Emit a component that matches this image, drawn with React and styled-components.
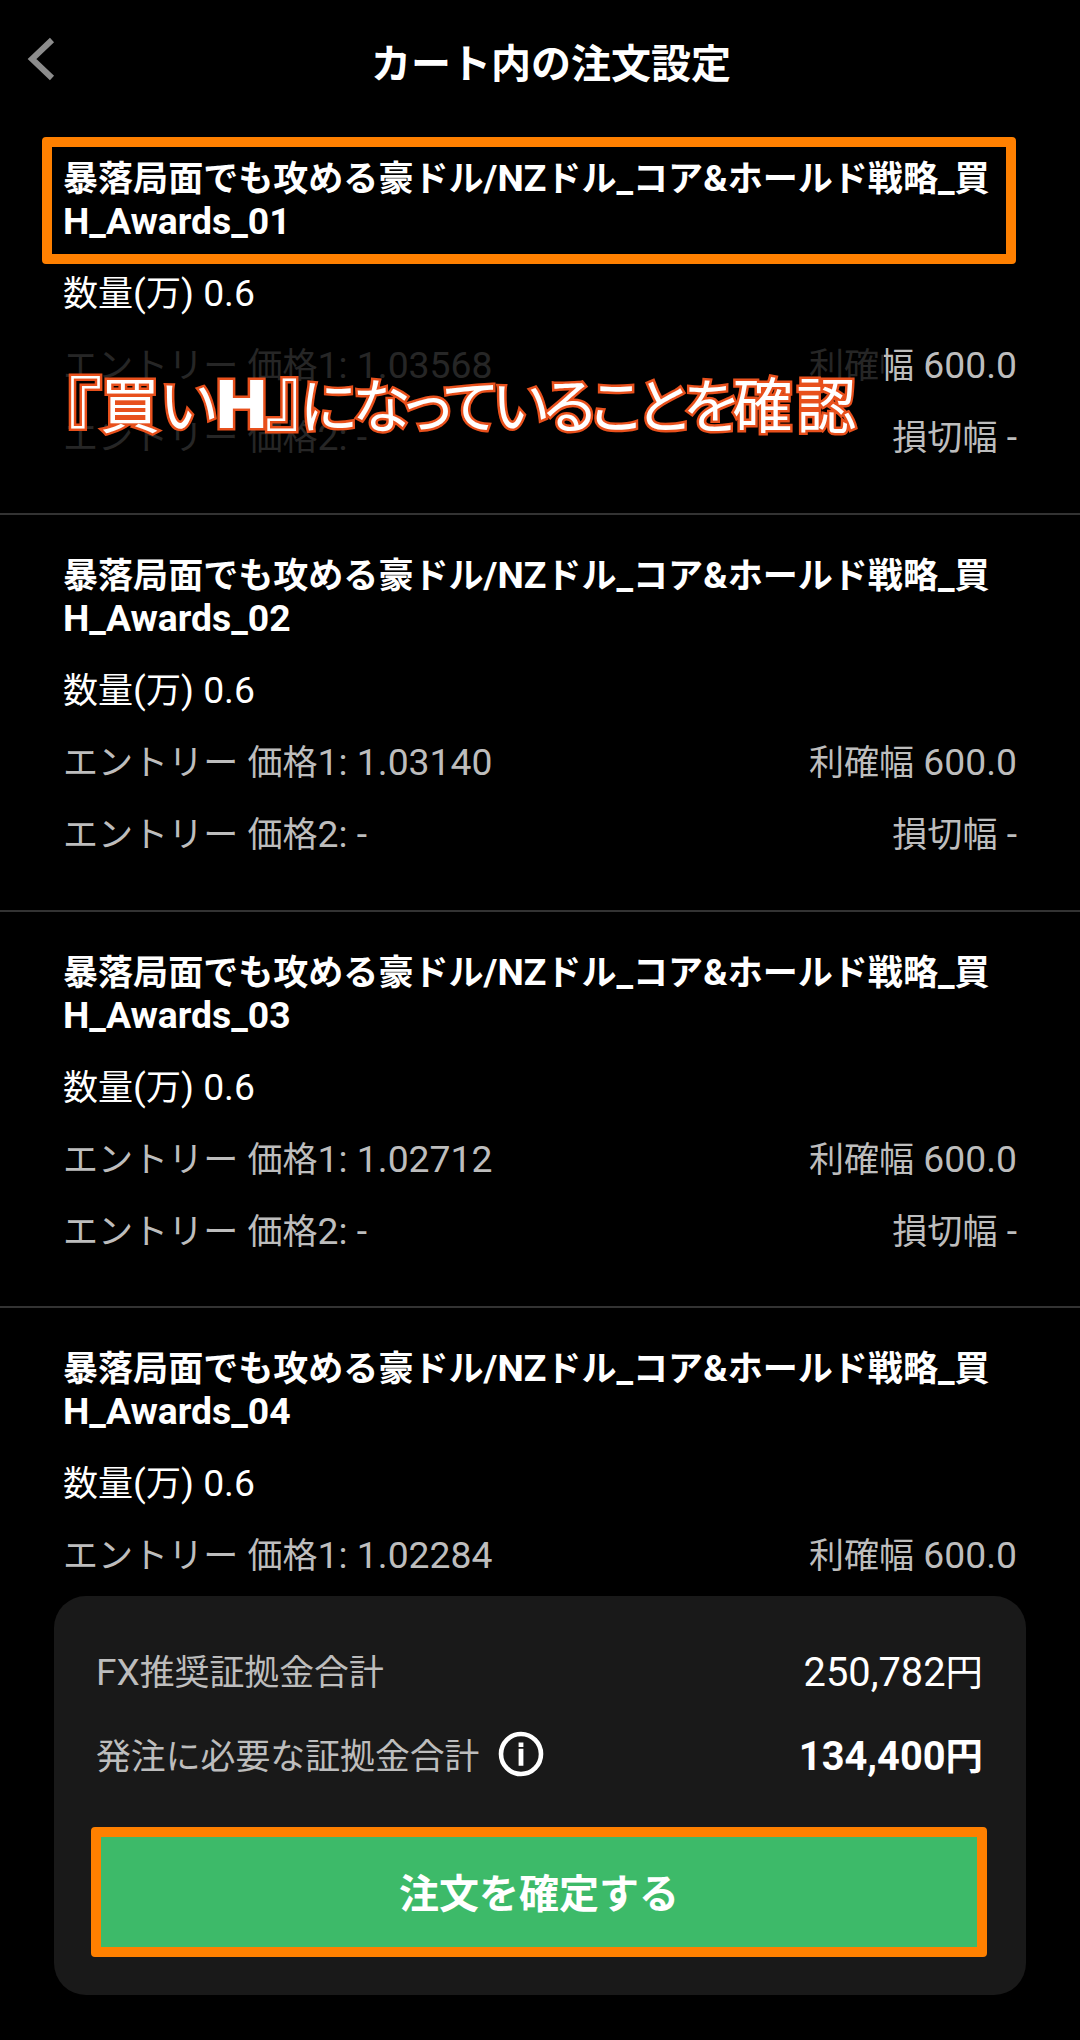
import React from 'react'
import styled, { createGlobalStyle } from 'styled-components'

const GlobalStyle = createGlobalStyle`
    * {
        box-sizing: border-box;
    }

    body {
        margin: 0;
        background: #000;
        color: #fff;
        font-family: Roboto, "Noto Sans CJK JP", sans-serif;
    }
`

const orders = [
    { id: '01', price: '1.03568' },
    { id: '02', price: '1.03140' },
    { id: '03', price: '1.02712' },
    { id: '04', price: '1.02284' },
]

const Screen = styled.div`
    position: relative;
    width: 1080px;
    height: 2040px;
    overflow: hidden;
    background: #000;
`

const Header = styled.header`
    display: grid;
    grid-template-columns: 84px 1fr 62px;
    align-items: center;
    height: 118px;
    padding-top: 12px;
`

const BackButton = styled.button`
    display: flex;
    align-items: center;
    width: 84px;
    height: 60px;
    margin-top: -12px;
    padding: 0 0 0 26px;
    border: 0;
    background: none;
    color: #8c8c8c;
`

const HeaderTitle = styled.h1`
    margin: 0;
    font-size: 40px;
    line-height: 48px;
    font-weight: 700;
    text-align: center;
`

// Japanese glyphs are set a little smaller than the latin ones around them
const Japanese = styled.span`
    font-family: "Noto Sans CJK JP", sans-serif;
    font-size: 0.94em;
    line-height: 0;
`

const OrderItem = styled.article`
    display: flex;
    flex-direction: column;
    gap: 29px;
    height: 396.8px;
    padding: 39px 63px 0 63px;
    border-bottom: 2px solid #333;
    font-size: 37.3px;
    line-height: 43px;

    &:last-child {
        border-bottom: 0;
    }
`

const OrderName = styled.h2`
    position: relative;
    margin: 0;
    font-size: inherit;
    font-weight: 700;
    white-space: nowrap;
`

const Quantity = styled.div`
    white-space: pre;
`

const Detail = styled.div`
    display: flex;
    justify-content: space-between;
    color: #bdbdbd;
    white-space: pre;
`

const NameFrame = styled.span`
    position: absolute;
    top: -20px;
    left: -21px;
    width: 974px;
    height: 127px;
    border: 10px solid #ff8000;
    border-radius: 4px;
`

const Caption = styled.div`
    position: absolute;
    top: 345px;
    left: 38px;
    width: 846px;
    height: 118px;
    padding-left: 24px;
    background: rgba(0, 0, 0, 0.8);
    color: #fff;
    font-family: "Noto Sans CJK JP", sans-serif;
    font-size: 60px;
    font-weight: 400;
    font-feature-settings: "palt";
    line-height: 113px;
    white-space: nowrap;
    -webkit-text-stroke: 5px #e8501c;
    paint-order: stroke fill;
`

const Bracket = styled.span`
    font-size: 78px;
    letter-spacing: ${({ $by }) => $by}px;
    line-height: 0;
    vertical-align: ${({ $rise }) => $rise}px;
`

const Kana = styled.span`
    font-size: 59px;
    letter-spacing: -5.2px;
`

const Kanji = styled.span`
    letter-spacing: 4px;
`

const Heavy = styled.span`
    font-family: Inter, sans-serif;
    font-size: 66px;
    font-weight: 900;
    line-height: 0;
`

const Summary = styled.section`
    position: absolute;
    top: 1596px;
    left: 54px;
    display: flex;
    flex-direction: column;
    width: 972px;
    height: 399px;
    padding: 52px 39px 0 37px;
    border-radius: 32px;
    background: #191919;
`

const SummaryRow = styled.div`
    display: flex;
    align-items: center;
    justify-content: space-between;
    height: 50px;
    margin-bottom: 34px;
    padding: 0 4px 0 5px;
    line-height: 50px;
`

const SummaryLabel = styled.div`
    display: flex;
    align-items: center;
    gap: 19px;
    color: #bdbdbd;
    font-size: 37.1px;

    svg {
        margin-top: -6px;
    }
`

const Amount = styled.div`
    font-size: 39.8px;
    font-weight: ${({ $bold }) => ($bold ? 700 : 400)};
`

const ConfirmButton = styled.button`
    width: 896px;
    height: 130px;
    margin-top: 11px;
    padding: 0 0 2px;
    border: 10px solid #ff8000;
    border-radius: 4px;
    background: #3dba69;
    background-clip: padding-box;
    color: #fff;
    font-family: "Noto Sans CJK JP", sans-serif;
    font-size: 40px;
    font-weight: 700;
`

const Mixed = ({ children }) => (
    children
        .split(/([\u3000-\u9fff]+)/)
        .map((part, i) => (i % 2 ? <Japanese key={i}>{part}</Japanese> : part))
)

const BackIcon = () => (
    <svg width="30" height="44" viewBox="0 0 30 44" fill="none">
        <path d="M26 3 L6 22 L26 41" stroke="currentColor" strokeWidth="6" />
    </svg>
)

const InfoIcon = () => (
    <svg width="46" height="46" viewBox="0 0 46 46" fill="none">
        <circle cx="23" cy="23" r="20" stroke="#fff" strokeWidth="4.6" />
        <path d="M23 11.5v4.6M23 17.8v17" stroke="#fff" strokeWidth="4.8" />
    </svg>
)

const Order = ({ id, price, framed }) => (
    <OrderItem>
        <OrderName>
            <Mixed>暴落局面でも攻める豪ドル/NZドル_コア&ホールド戦略_買</Mixed>
            <br />
            H_Awards_{id}
            {framed && <NameFrame />}
        </OrderName>
        <Quantity><Mixed>数量(万) 0.6</Mixed></Quantity>
        <Detail>
            <span><Mixed>{`エントリー 価格1: ${price}`}</Mixed></span>
            <span><Mixed>利確幅 600.0</Mixed></span>
        </Detail>
        <Detail>
            <span><Mixed>エントリー 価格2: -</Mixed></span>
            <span><Mixed>損切幅 -</Mixed></span>
        </Detail>
    </OrderItem>
)

const App = () => (
    <Screen>
        <GlobalStyle />
        <Header>
            <BackButton aria-label="戻る"><BackIcon /></BackButton>
            <HeaderTitle>カート内の注文設定</HeaderTitle>
        </Header>

        <main>
            {orders.map((order, i) => (
                <Order key={order.id} {...order} framed={i === 0} />
            ))}
        </main>

        <Caption>
            <Bracket $by={-1} $rise={-15}>『</Bracket>
            買い
            <Heavy>H</Heavy>
            <Bracket $by={-5} $rise={4}>』</Bracket>
            <Kana>になっていることを</Kana>
            <Kanji>確認</Kanji>
        </Caption>

        <Summary>
            <SummaryRow>
                <SummaryLabel><span><Mixed>FX推奨証拠金合計</Mixed></span></SummaryLabel>
                <Amount><Mixed>250,782円</Mixed></Amount>
            </SummaryRow>
            <SummaryRow>
                <SummaryLabel>
                    <span><Mixed>発注に必要な証拠金合計</Mixed></span>
                    <InfoIcon />
                </SummaryLabel>
                <Amount $bold><Mixed>134,400円</Mixed></Amount>
            </SummaryRow>
            <ConfirmButton>注文を確定する</ConfirmButton>
        </Summary>
    </Screen>
)

export default App
